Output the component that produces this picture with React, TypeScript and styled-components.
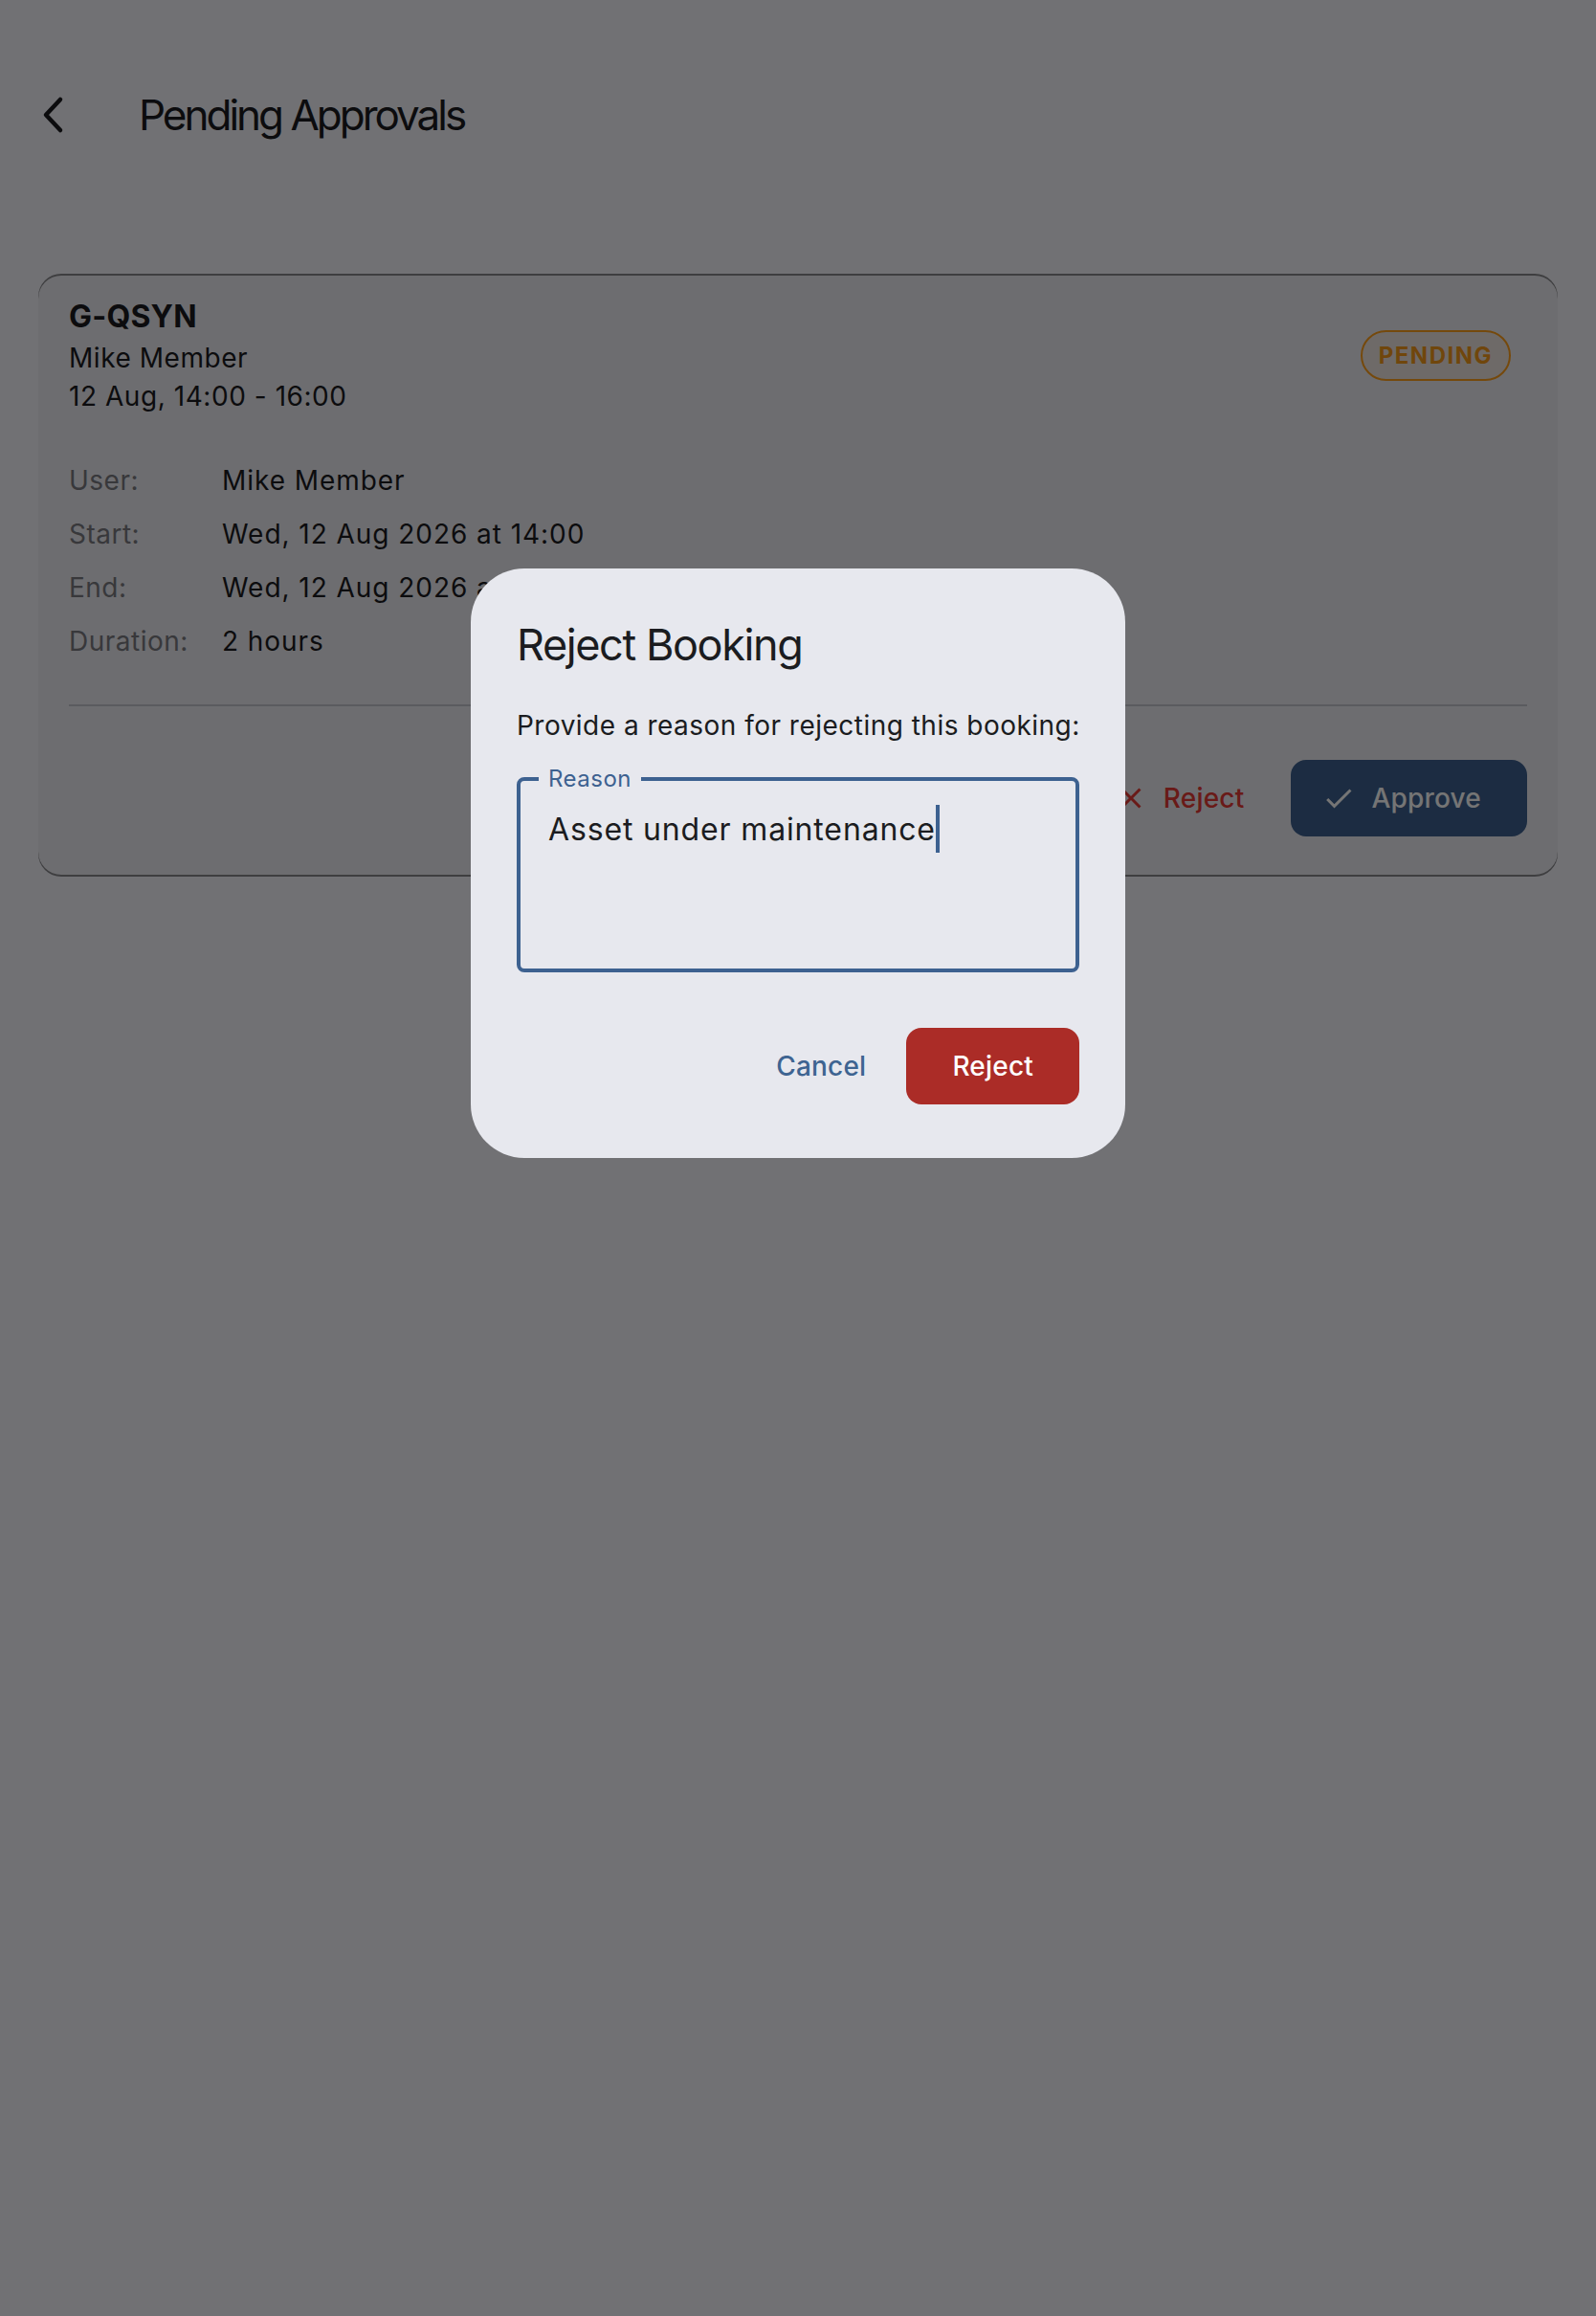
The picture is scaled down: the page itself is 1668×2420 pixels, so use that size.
import React from 'react'
import styled, { createGlobalStyle } from 'styled-components'

const primary = '#3d6190'
const ink = '#1b1b1f'

const GlobalStyle = createGlobalStyle`
  * { box-sizing: border-box; }
  html, body { margin: 0; padding: 0; }
  body {
    background: #f6f6fd;
    color: ${ink};
    font-family: Inter, "Noto Sans", "Liberation Sans", sans-serif;
    -webkit-font-smoothing: antialiased;
  }
`

type Detail = { label: string; value: string }

const details: Detail[] = [
  { label: 'User:', value: 'Mike Member' },
  { label: 'Start:', value: 'Wed, 12 Aug 2026 at 14:00' },
  { label: 'End:', value: 'Wed, 12 Aug 2026 at 16:00' },
  { label: 'Duration:', value: '2 hours' },
]

function ChevronIcon() {
  return (
    <svg width="24" height="40" viewBox="0 0 24 40" fill="none">
      <path d="M19 4 L4 20 L19 36" stroke={ink} strokeWidth="4.5" strokeLinecap="round" strokeLinejoin="round" />
    </svg>
  )
}

function CloseIcon() {
  return (
    <svg width="36" height="36" viewBox="0 0 24 24" fill="currentColor">
      <path d="M19 6.41L17.59 5 12 10.59 6.41 5 5 6.41 10.59 12 5 17.59 6.41 19 12 13.41 17.59 19 19 17.59 13.41 12z" />
    </svg>
  )
}

function CheckIcon() {
  return (
    <svg width="36" height="36" viewBox="0 0 24 24" fill="currentColor">
      <path d="M9 16.17L4.83 12l-1.42 1.41L9 19 21 7l-1.41-1.41z" />
    </svg>
  )
}

export default function App() {
  return (
    <>
      <GlobalStyle />
      <Page>
        <Header>
          <BackButton aria-label="Back">
            <ChevronIcon />
          </BackButton>
          <HeaderTitle>Pending Approvals</HeaderTitle>
        </Header>

        <Card>
          <CardHeader>
            <HeaderInfo>
              <Registration>G-QSYN</Registration>
              <SubLine>Mike Member</SubLine>
              <SubLine>12 Aug, 14:00 - 16:00</SubLine>
            </HeaderInfo>
            <StatusBadge>PENDING</StatusBadge>
          </CardHeader>

          <DetailList>
            {details.map((d) => (
              <DetailRow key={d.label}>
                <DetailLabel>{d.label}</DetailLabel>
                <DetailValue>{d.value}</DetailValue>
              </DetailRow>
            ))}
          </DetailList>

          <Divider />

          <CardActions>
            <RejectTextButton>
              <CloseIcon />
              Reject
            </RejectTextButton>
            <ApproveButton>
              <CheckIcon />
              Approve
            </ApproveButton>
          </CardActions>
        </Card>
      </Page>

      <Scrim />
      <DialogLayer>
        <Dialog role="dialog">
          <DialogTitle>Reject Booking</DialogTitle>
          <DialogText>Provide a reason for rejecting this booking:</DialogText>
          <ReasonField>
            <ReasonLabel>Reason</ReasonLabel>
            <ReasonInput>
              Asset under maintenance<Caret />
            </ReasonInput>
          </ReasonField>
          <DialogActions>
            <CancelButton>Cancel</CancelButton>
            <DangerButton>Reject</DangerButton>
          </DialogActions>
        </Dialog>
      </DialogLayer>
    </>
  )
}

const Page = styled.div`
  width: 1668px;
  min-height: 2420px;
  padding-top: 64px;
`

const Header = styled.header`
  display: flex;
  align-items: center;
  height: 112px;
`

const BackButton = styled.button`
  display: flex;
  align-items: center;
  justify-content: center;
  width: 112px;
  height: 112px;
  padding: 0;
  border: none;
  background: none;
`

const HeaderTitle = styled.h1`
  margin: 0 0 0 33px;
  font-size: 44px;
  line-height: 56px;
  font-weight: 400;
  letter-spacing: -3px;
  color: ${ink};
`

const Card = styled.section`
  margin: 112px 40px 0;
  padding: 20px 32px 40px;
  background: #eeeef3;
  border-radius: 24px;
  box-shadow: 0 -2px 0 rgba(0, 0, 0, 0.45), 0 2px 0 rgba(0, 0, 0, 0.45);
`

const CardHeader = styled.div`
  display: flex;
  align-items: center;
  justify-content: space-between;
`

const HeaderInfo = styled.div`
  display: flex;
  flex-direction: column;
`

const Registration = styled.div`
  font-size: 32px;
  line-height: 46px;
  font-weight: 700;
  letter-spacing: 0.2px;
`

const SubLine = styled.div`
  font-size: 28px;
  line-height: 40px;
  letter-spacing: 0.55px;
`

const StatusBadge = styled.span`
  display: inline-flex;
  align-items: center;
  height: 53px;
  margin-right: 17px;
  padding: 0 17px;
  border: 2px solid #ff9f1c;
  border-radius: 999px;
  background: rgba(255, 159, 28, 0.08);
  color: #f59a1c;
  font-size: 24px;
  font-weight: 700;
  letter-spacing: 1.5px;
`

const DetailList = styled.div`
  display: flex;
  flex-direction: column;
  gap: 16px;
  margin-top: 48px;
`

const DetailRow = styled.div`
  display: flex;
  font-size: 28px;
  line-height: 40px;
`

const DetailLabel = styled.span`
  width: 160px;
  color: #7b7b82;
  letter-spacing: 0.5px;
`

const DetailValue = styled.span`
  color: ${ink};
  letter-spacing: 0.95px;
`

const Divider = styled.hr`
  margin: 46px 0 0;
  height: 2px;
  border: none;
  background: #c4c6cf;
`

const CardActions = styled.div`
  display: flex;
  justify-content: flex-end;
  align-items: center;
  gap: 17px;
  margin-top: 56px;
`

const BaseButton = styled.button`
  display: inline-flex;
  align-items: center;
  height: 80px;
  border: none;
  border-radius: 16px;
  font-family: inherit;
  font-size: 28px;
  font-weight: 500;
  letter-spacing: 0.2px;
  cursor: pointer;
`

const RejectTextButton = styled(BaseButton)`
  gap: 16px;
  padding: 0 32px 0 24px;
  background: transparent;
  color: #e53935;
`

const ApproveButton = styled(BaseButton)`
  gap: 16px;
  padding: 0 48px 0 32px;
  background: ${primary};
  color: #ffffff;
`

const Scrim = styled.div`
  position: fixed;
  inset: 0;
  background: rgba(0, 0, 0, 0.54);
`

const DialogLayer = styled.div`
  position: fixed;
  inset: 0;
  display: flex;
  justify-content: center;
  align-items: flex-start;
  padding-top: 594px;
`

const Dialog = styled.div`
  width: 684px;
  padding: 48px 48px 56px;
  background: #e7e8ee;
  border-radius: 56px;
  color: #1b1c20;
`

const DialogTitle = styled.h2`
  margin: 0;
  font-size: 45px;
  line-height: 64px;
  font-weight: 400;
  letter-spacing: -1.4px;
`

const DialogText = styled.p`
  margin: 32px 0 0;
  font-size: 28px;
  line-height: 40px;
  letter-spacing: 0.48px;
  white-space: nowrap;
`

const ReasonField = styled.fieldset`
  margin: 24px 0 0;
  padding: 0;
  border: 4px solid ${primary};
  border-radius: 8px;
`

const ReasonLabel = styled.legend`
  margin-left: 19px;
  padding: 0 10px;
  font-size: 24px;
  line-height: 24px;
  letter-spacing: 0.5px;
  color: ${primary};
`

const ReasonInput = styled.div`
  min-height: 186px;
  padding: 17px 28px 25px 29px;
  font-size: 32px;
  line-height: 48px;
  letter-spacing: 0.85px;
  color: #1b1c20;
`

const Caret = styled.span`
  display: inline-block;
  width: 4px;
  height: 50px;
  margin-top: -2px;
  vertical-align: top;
  background: ${primary};
`

const DialogActions = styled.div`
  display: flex;
  justify-content: flex-end;
  gap: 18px;
  margin-top: 58px;
`

const CancelButton = styled(BaseButton)`
  padding: 0 24px;
  background: transparent;
  color: #3e6491;
`

const DangerButton = styled(BaseButton)`
  padding: 0 48px;
  background: #ab2c27;
  color: #ffffff;
`
